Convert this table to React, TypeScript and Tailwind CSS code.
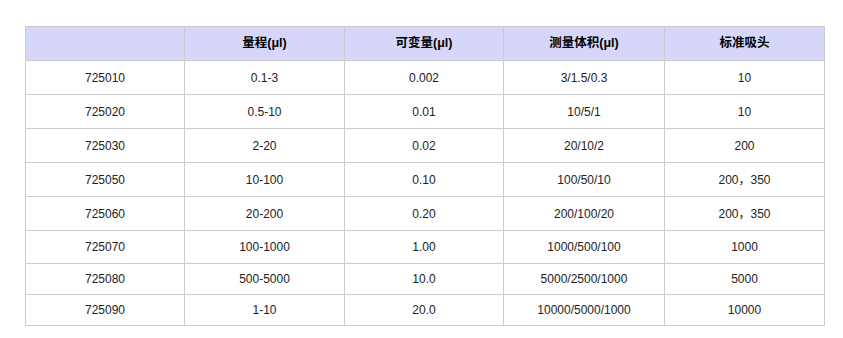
const rows: [string, string, string, string, string, number][] = [
  ['725010', '0.1-3', '0.002', '3/1.5/0.3', '10', 34],
  ['725020', '0.5-10', '0.01', '10/5/1', '10', 34],
  ['725030', '2-20', '0.02', '20/10/2', '200', 34],
  ['725050', '10-100', '0.10', '100/50/10', '200，350', 34],
  ['725060', '20-200', '0.20', '200/100/20', '200，350', 34],
  ['725070', '100-1000', '1.00', '1000/500/100', '1000', 33],
  ['725080', '500-5000', '10.0', '5000/2500/1000', '5000', 31],
  ['725090', '1-10', '20.0', '10000/5000/1000', '10000', 31],
]

const headers = ['', '量程(μl)', '可变量(μl)', '测量体积(μl)', '标准吸头']

export default function App() {
  return (
    <div className="w-[843px] h-[338px] bg-white pt-[26px] pl-[25px] font-['Liberation_Sans','Noto_Sans_CJK_SC',sans-serif] text-[12px] text-[#222]">
      <table className="w-[799px] border-collapse table-fixed">
        <colgroup>
          <col className="w-[159px]" />
          <col className="w-[160px]" />
          <col className="w-[159px]" />
          <col className="w-[161px]" />
          <col className="w-[160px]" />
        </colgroup>
        <thead>
          <tr className="h-[34px] bg-[#d6d6fa]">
            {headers.map((h, i) => (
              <th key={i} className="border border-[#cccccc] text-center font-bold text-[12.5px] text-black p-0">
                {h}
              </th>
            ))}
          </tr>
        </thead>
        <tbody>
          {rows.map(r => (
            <tr key={r[0]} style={{ height: r[5] }}>
              {r.slice(0, 5).map((c, i) => (
                <td key={i} className="border border-[#cccccc] text-center p-0">
                  {c}
                </td>
              ))}
            </tr>
          ))}
        </tbody>
      </table>
    </div>
  )
}
